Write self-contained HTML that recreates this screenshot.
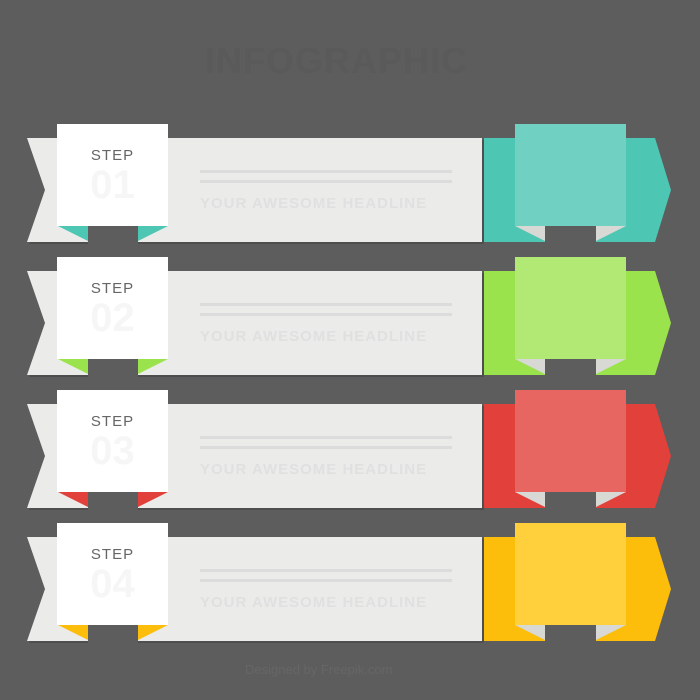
<!DOCTYPE html><html><head><style>
body{margin:0;width:700px;height:700px;background:#5d5d5d;overflow:hidden;font-family:"Liberation Sans",sans-serif;position:relative}
.t{position:absolute;color:#575757;font-weight:bold}
.step{position:absolute;left:57px;width:111px;text-align:center;font-size:15px;letter-spacing:1px;color:#666}
.num{position:absolute;left:57px;width:111px;text-align:center;font-size:40px;font-weight:bold;color:#f6f6f6}
.ln{position:absolute;left:200px;width:252px;height:3px;background:#dcdcdc}
.hd{position:absolute;left:200px;width:252px;font-size:15px;font-weight:bold;color:#e0e0e0;letter-spacing:1px;white-space:nowrap}
</style></head><body>
<div class="t" style="left:205px;top:40px;font-size:36px;letter-spacing:1px;color:#5a5a5a">INFOGRAPHIC</div>
<svg width="700" height="700" style="position:absolute;left:0;top:0">
<defs>
<g id="r">
<polygon points="29,2 484,2 484,106 29,106 47,54" fill="#333" opacity=".35"/>
<polygon points="27,0 482,0 482,104 27,104 45,52" fill="#ebebea"/>
<polygon points="484,0 655,0 671,52 655,104 484,104" fill="var(--a)"/>
<rect x="88" y="88" width="50" height="20" fill="#5d5d5d"/>
<rect x="545" y="88" width="51" height="20" fill="#5d5d5d"/>
<polygon points="58,88 88,88 88,103" fill="var(--a)"/>
<polygon points="138,88 168,88 138,103" fill="var(--a)"/>
<rect x="57" y="-14" width="111" height="102" fill="#fff"/>
<rect x="515" y="-14" width="111" height="102" fill="var(--b)"/>
<polygon points="515,88 545,88 545,103" fill="#d8d8d4"/>
<polygon points="596,88 626,88 596,103" fill="#d8d8d4"/>
</g>
</defs>
<use href="#r" y="138" style="--a:#4ec6b4;--b:#70d1c2"/>
<use href="#r" y="271" style="--a:#9be34c;--b:#b2e974"/>
<use href="#r" y="404" style="--a:#e1403b;--b:#e86661"/>
<use href="#r" y="537" style="--a:#fdbe0b;--b:#ffd03c"/>
</svg>
<div class="step" style="top:147px">STEP</div><div class="num" style="top:163px">01</div>
<div class="step" style="top:280px">STEP</div><div class="num" style="top:296px">02</div>
<div class="step" style="top:413px">STEP</div><div class="num" style="top:429px">03</div>
<div class="step" style="top:546px">STEP</div><div class="num" style="top:562px">04</div>
<div class="ln" style="top:170px"></div><div class="ln" style="top:180px"></div><div class="hd" style="top:195px">YOUR AWESOME HEADLINE</div>
<div class="ln" style="top:303px"></div><div class="ln" style="top:313px"></div><div class="hd" style="top:328px">YOUR AWESOME HEADLINE</div>
<div class="ln" style="top:436px"></div><div class="ln" style="top:446px"></div><div class="hd" style="top:461px">YOUR AWESOME HEADLINE</div>
<div class="ln" style="top:569px"></div><div class="ln" style="top:579px"></div><div class="hd" style="top:594px">YOUR AWESOME HEADLINE</div>
<div class="t" style="left:245px;top:662px;font-size:13px;font-weight:normal;color:#666">Designed by Freepik.com</div>
</body></html>
